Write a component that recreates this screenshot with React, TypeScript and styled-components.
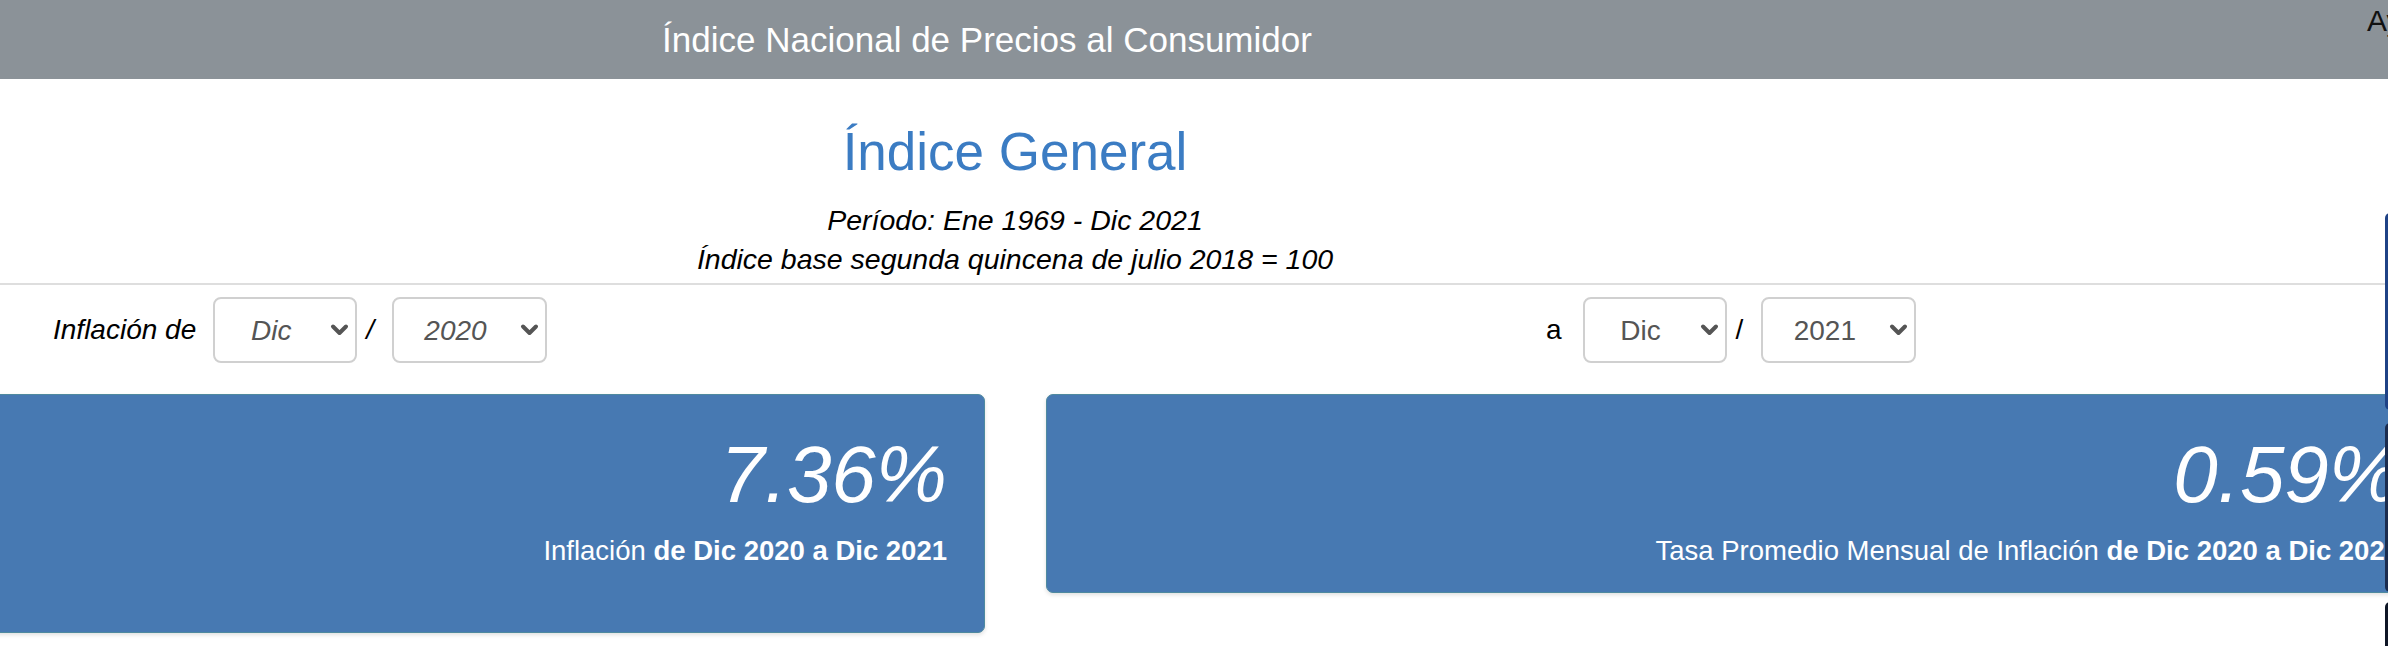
import React from "react";
import styled, { createGlobalStyle } from "styled-components";

const GlobalStyle = createGlobalStyle`
  html, body {
    margin: 0;
    padding: 0;
    background: #fff;
  }
  body {
    font-family: "Liberation Sans", Arial, sans-serif;
    overflow: hidden;
  }
`;

const Page = styled.div`
  width: 2388px;
  height: 646px;
  overflow: hidden;
  background: #fff;
`;

const Header = styled.header`
  display: flex;
  height: 79px;
  background: #8b9298;
  overflow: hidden;
`;

const HeaderTitle = styled.h1`
  flex: 0 0 1974px;
  margin: 0;
  text-align: center;
  line-height: 79px;
  font-size: 35px;
  font-weight: normal;
  color: #fff;
`;

const HeaderLink = styled.a`
  flex: 0 0 auto;
  margin-left: 393px;
  padding-top: 4px;
  font-size: 30px;
  line-height: 34px;
  color: #111;
  white-space: nowrap;
  text-decoration: none;
`;

const Intro = styled.section`
  width: 2030px;
  padding-top: 43px;
  text-align: center;
`;

const Title = styled.h2`
  margin: 0;
  font-size: 53px;
  line-height: 59px;
  font-weight: normal;
  color: #3b7cc3;
`;

const Meta = styled.p`
  margin: 20px 0 0;
  font-size: 28.5px;
  line-height: 39px;
  font-style: italic;
  color: #000;
`;

const Divider = styled.hr`
  margin: 4px 0 0;
  border: 0;
  border-top: 2px solid #dedede;
`;

const FilterRow = styled.div`
  display: grid;
  grid-template-columns: 1493px auto;
  padding-left: 53px;
  margin-top: 12px;
`;

const FilterGroup = styled.div<{ $italic?: boolean }>`
  display: flex;
  align-items: center;
  height: 66px;
  font-size: 28px;
  font-style: ${(p) => (p.$italic ? "italic" : "normal")};
  color: #000;
`;

const FilterLabel = styled.span<{ $gap: number }>`
  margin-right: ${(p) => p.$gap}px;
`;

const Slash = styled.span`
  padding: 0 18px 0 9px;
`;

const SelectWrap = styled.div<{ $w: number }>`
  position: relative;
  width: ${(p) => p.$w}px;
  height: 66px;
`;

const Select = styled.select`
  appearance: none;
  -webkit-appearance: none;
  box-sizing: border-box;
  width: 100%;
  height: 100%;
  border: 2px solid #d0d0d0;
  border-radius: 8px;
  background: #fff;
  padding: 0 40px 0 12px;
  font: inherit;
  font-size: 28px;
  color: #555;
  text-align: center;
  text-align-last: center;
  outline: none;
`;

const Chevron = styled.svg`
  position: absolute;
  right: 8px;
  top: 50%;
  transform: translateY(-50%);
  pointer-events: none;
`;

const CardRow = styled.div`
  display: grid;
  grid-template-columns: 1fr 1fr;
  column-gap: 61px;
  align-items: start;
  width: 2845px;
  margin: 31px 0 0 -407px;
`;

const StatCard = styled.div<{ $tall?: boolean }>`
  background: #4779b2;
  border: 1px solid #4f8a9f;
  border-radius: 7px;
  box-shadow: 0 2px 4px rgba(0, 0, 0, 0.12);
  color: #fff;
  text-align: right;
  padding: 35px 37px ${(p) => (p.$tall ? 67 : 27)}px;
`;

const StatValue = styled.div`
  font-size: 80px;
  line-height: 89px;
  font-style: italic;
`;

const StatLabel = styled.div`
  margin-top: 17px;
  font-size: 27.5px;
  line-height: 29px;
  white-space: nowrap;
  b {
    font-weight: bold;
  }
`;

const SideDock = styled.div`
  position: fixed;
  top: 213px;
  right: -37px;
  display: flex;
  flex-direction: column;
`;

const DockTab = styled.div<{ $color: string; $h: number; $gap: number }>`
  width: 40px;
  height: ${(p) => p.$h}px;
  margin-bottom: ${(p) => p.$gap}px;
  background: ${(p) => p.$color};
  border-radius: 5px 0 0 5px;
`;

const months = ["Ene", "Feb", "Mar", "Abr", "May", "Jun", "Jul", "Ago", "Sep", "Oct", "Nov", "Dic"];
const years = Array.from({ length: 53 }, (_, i) => String(1969 + i));

const DateSelect = ({ value, options, width }: { value: string; options: string[]; width: number }) => (
  <SelectWrap $w={width}>
    <Select defaultValue={value}>
      {options.map((o) => (
        <option key={o}>{o}</option>
      ))}
    </Select>
    <Chevron width="19" height="13" viewBox="0 0 19 13">
      <polyline points="3,3 9.5,9.5 16,3" fill="none" stroke="#555" strokeWidth="4" strokeLinecap="round" strokeLinejoin="round" />
    </Chevron>
  </SelectWrap>
);

const App = () => {
  return (
    <Page>
      <GlobalStyle />
      <Header>
        <HeaderTitle>Índice Nacional de Precios al Consumidor</HeaderTitle>
        <HeaderLink>Ayuda</HeaderLink>
      </Header>

      <Intro>
        <Title>Índice General</Title>
        <Meta>
          Período: Ene 1969 - Dic 2021
          <br />
          Índice base segunda quincena de julio 2018 = 100
        </Meta>
      </Intro>
      <Divider />

      <FilterRow>
        <FilterGroup $italic>
          <FilterLabel $gap={17}>Inflación de</FilterLabel>
          <DateSelect value="Dic" options={months} width={144} />
          <Slash>/</Slash>
          <DateSelect value="2020" options={years} width={155} />
        </FilterGroup>
        <FilterGroup>
          <FilterLabel $gap={21}>a</FilterLabel>
          <DateSelect value="Dic" options={months} width={144} />
          <Slash>/</Slash>
          <DateSelect value="2021" options={years} width={155} />
        </FilterGroup>
      </FilterRow>

      <CardRow>
        <StatCard $tall>
          <StatValue>7.36%</StatValue>
          <StatLabel>
            Inflación <b>de Dic 2020 a Dic 2021</b>
          </StatLabel>
        </StatCard>
        <StatCard>
          <StatValue>0.59%</StatValue>
          <StatLabel>
            Tasa Promedio Mensual de Inflación <b>de Dic 2020 a Dic 2021</b>
          </StatLabel>
        </StatCard>
      </CardRow>

      <SideDock>
        <DockTab $color="#1f4286" $h={197} $gap={13} />
        <DockTab $color="#1b2c4e" $h={169} $gap={10} />
        <DockTab $color="#0e1626" $h={120} $gap={0} />
      </SideDock>
    </Page>
  );
};

export default App;
